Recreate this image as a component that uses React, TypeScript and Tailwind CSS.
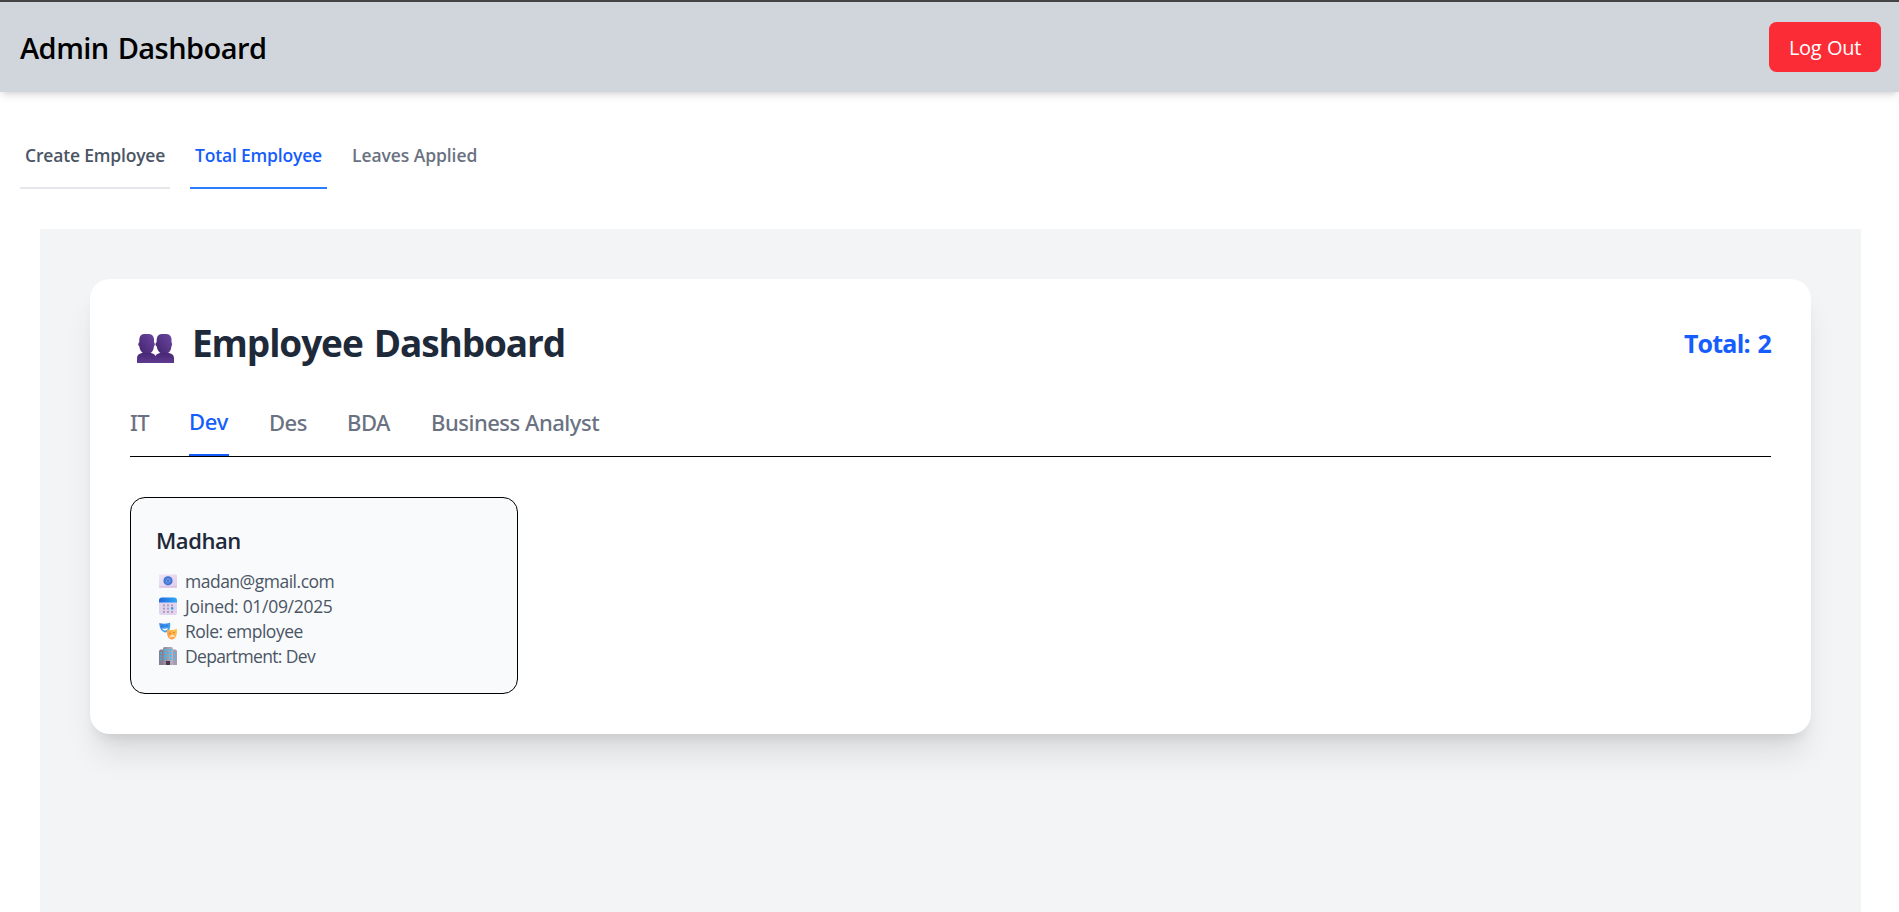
import React from "react";

function PeopleIcon() {
  return (
    <svg width="38" height="30" viewBox="0 0 38 30" className="block">
      <defs>
        <linearGradient id="head" x1="0" y1="1" x2="1" y2="0">
          <stop offset="0" stopColor="#43246f" />
          <stop offset="1" stopColor="#6b46a0" />
        </linearGradient>
        <linearGradient id="body" x1="0" y1="0" x2="0" y2="1">
          <stop offset="0" stopColor="#472775" />
          <stop offset="1" stopColor="#5f3b90" />
        </linearGradient>
      </defs>
      <g fill="url(#head)">
        <rect x="1.3" y="8" width="16.500" height="4.500" rx="2" />
        <rect x="18.500" y="8" width="16.500" height="4.500" rx="2" />
        <path d="M2.300 5Q3 0 7.500 0H11.500Q16.300 0 17 5V12Q16.500 18.500 12 19.500H7.500Q3 18.500 2.300 12Z" />
        <path d="M19.700 5Q20.500 0 25 0H29Q33.800 0 34.500 5V12Q34 18.500 29.500 19.500H25Q20.500 18.500 19.700 12Z" />
      </g>
      <path d="M0 29V24Q0 20 5 19H14Q19 20 19 24V29Z" fill="url(#body)" />
      <path d="M18 29V24Q18 20 23 19H32Q37 20 37 24V29Z" fill="url(#body)" />
    </svg>
  );
}

function MailIcon() {
  return (
    <svg width="18" height="18" viewBox="0 0 18 18" className="block">
      <defs>
        <linearGradient id="mail" x1="0" y1="0" x2="1" y2="1">
          <stop offset="0" stopColor="#efe6f5" />
          <stop offset="1" stopColor="#e0cbea" />
        </linearGradient>
      </defs>
      <rect y="2.500" width="18" height="13" rx="1" fill="url(#mail)" />
      <path d="M0 14.500H18V15Q18 15.500 17 15.500H1Q0 15.500 0 15Z" fill="#d3b3df" />
      <circle cx="9" cy="8.800" r="4.600" fill="#3b72d2" />
      <circle cx="9" cy="8.800" r="1.600" fill="none" stroke="#8fb0ee" strokeWidth="0.700" />
      <path d="M10.600 7.200V9.700Q11.800 10.800 12 8.800A3 3 0 1 0 10.500 11.500" fill="none" stroke="#6f98e4" strokeWidth="0.600" />
    </svg>
  );
}

function CalendarIcon() {
  return (
    <svg width="18" height="18" viewBox="0 0 18 18" className="block">
      <defs>
        <linearGradient id="cal" x1="0" y1="0" x2="1" y2="0">
          <stop offset="0" stopColor="#2368dc" />
          <stop offset="1" stopColor="#2ea7f8" />
        </linearGradient>
      </defs>
      <rect y="1" width="18" height="17" rx="2.500" fill="#e2d3ee" />
      <path d="M0 5.500V3.500Q0 0.500 3 0.500H15Q18 0.500 18 3.500V5.500Z" fill="url(#cal)" />
      <path d="M4 7.500h2v1.700H4zM8 7.500h2v1.700H8zM12 7.500h2v1.700h-2zM4 10.800h2v1.700H4zM8 10.800h2v1.700H8zM4 14h2v1.700H4zM8 14h2v1.700H8zM12 14h2v1.700h-2z" fill="#a79bb8" />
      <path d="M12 10.200h2.300v2.300H12z" fill="#289cf2" />
    </svg>
  );
}

function MasksIcon() {
  return (
    <svg width="18" height="18" viewBox="0 0 18 18" className="block">
      <defs>
        <linearGradient id="joy" x1="0" y1="0" x2="1" y2="1">
          <stop offset="0" stopColor="#3579e4" />
          <stop offset="1" stopColor="#43b5fa" />
        </linearGradient>
        <linearGradient id="sad" x1="1" y1="0" x2="0" y2="1">
          <stop offset="0" stopColor="#ffd052" />
          <stop offset="1" stopColor="#ff8d45" />
        </linearGradient>
      </defs>
      <path d="M0.300 1Q5 2.500 11 0.700Q12 6 9.500 9Q7 11.500 4 9.500Q0.500 7.500 0.300 1Z" fill="url(#joy)" />
      <path d="M2.300 4.500Q3.500 3.300 4.700 4.300M6.700 4.300Q8 3.200 9.200 4.200" stroke="#205bb5" strokeWidth="0.700" fill="none" />
      <path d="M3 6.200Q6 7.500 9 5.800Q8.200 8.800 5.800 8.600Q4 8.400 3 6.200Z" fill="#fff" />
      <path d="M8 7.500Q13 9 18 6.800Q18.500 14 15.500 16.500Q12.500 18.500 9.500 16Q7.500 13 8 7.500Z" fill="url(#sad)" />
      <path d="M9.800 11.200Q11 12 12 10.800M14 10.600Q15.500 11.200 16.400 9.800" stroke="#c26a25" strokeWidth="0.700" fill="none" />
      <path d="M10.500 15.500Q12.500 11.500 15.700 14.500Q13 13.800 10.500 15.500Z" fill="#fff4df" stroke="#fff4df" strokeWidth="0.500" />
    </svg>
  );
}

function OfficeIcon() {
  return (
    <svg width="18" height="18" viewBox="0 0 18 18" className="block">
      <defs>
        <linearGradient id="tower" x1="0" y1="0" x2="1" y2="0">
          <stop offset="0" stopColor="#8d8695" />
          <stop offset="1" stopColor="#bcb3c0" />
        </linearGradient>
      </defs>
      <path d="M0 4.500Q0 3 1.500 2.500H5V18H0Z" fill="#857d91" />
      <path d="M13 2.500H16.500Q18 3 18 4.500V18H13Z" fill="#a69baf" />
      <path d="M4 1.500Q4 0 5.500 0H12.500Q14 0 14 1.500V18H4Z" fill="url(#tower)" />
      <path d="M5.600 2h1.500v2H5.600zM8.300 2h1.500v2H8.300zM11 2h1.500v2H11zM5.600 5h1.500v2H5.600zM8.300 5h1.500v2H8.300zM11 5h1.500v2H11zM5.600 8h1.500v2H5.600zM8.300 8h1.500v2H8.300zM11 8h1.500v2H11zM5.600 11h1.500v1.500H5.600zM8.300 11h1.500v1.500H8.300zM11 11h1.500v1.500H11zM1.500 5h1.200v2H1.500zM1.500 8.300h1.200v2H1.500zM1.500 11.500h1.200v2H1.500zM15.300 5h1.200v2h-1.200zM15.300 8.300h1.200v2h-1.200zM15.300 11.500h1.200v2h-1.200z" fill="#35c1fa" />
      <rect x="7" y="14" width="4" height="4" fill="#4c3852" />
    </svg>
  );
}

const details = [
  { icon: <MailIcon />, text: "madan@gmail.com", tracking: "tracking-[-0.500px]" },
  { icon: <CalendarIcon />, text: "Joined: 01/09/2025", tracking: "tracking-[-0.300px]" },
  { icon: <MasksIcon />, text: "Role: employee", tracking: "tracking-[-0.500px]" },
  { icon: <OfficeIcon />, text: "Department: Dev", tracking: "tracking-[-0.650px]" },
];

export default function App() {
  return (
    <div className="flex h-screen flex-col overflow-hidden bg-white font-['Open_Sans',sans-serif] whitespace-nowrap">
      <header className="flex h-[92px] shrink-0 items-start justify-between border-t-2 border-[#444446] bg-[#d1d5dc] pt-5 pr-[18px] pl-5 shadow-[0_5px_7.5px_-1.25px_rgba(0,0,0,0.1),0_2.5px_5px_-2.5px_rgba(0,0,0,0.1)]">
        <h1 className="pt-[6px] text-[29px] leading-[40px] font-semibold tracking-[-0.550px] [word-spacing:2px] text-black">Admin Dashboard</h1>
        <button className="flex h-[50px] w-[112px] items-center justify-center rounded-[7.5px] bg-[#fb2c36] pt-px text-[20px] tracking-[-0.350px] [word-spacing:1px] text-white">
          Log Out
        </button>
      </header>

      <nav className="flex h-[97px] shrink-0 items-end gap-5 pl-5 text-[17.500px] leading-[25px] font-semibold">
        <div className="h-[58px] w-[150px] border-b-2 border-[#e5e7eb] pt-[12px] pl-[5px] tracking-[-0.180px] text-[#4a5565]">Create Employee</div>
        <div className="h-[58px] w-[137px] border-b-2 border-[#2b7fff] pt-[12px] pl-[5px] tracking-[-0.180px] text-[#155dfc]">Total Employee</div>
        <div className="h-[58px] w-[135px] pt-[12px] pl-[5px] tracking-[-0.080px] text-[#6a7282]">Leaves Applied</div>
      </nav>

      <main className="mt-10 mr-[38px] ml-10 grow bg-[#f3f4f6] p-[50px]">
        <section className="flex h-[455px] flex-col rounded-[20px] bg-white px-10 pt-[40px] shadow-[0_25px_31.25px_-6.25px_rgba(0,0,0,0.1),0_10px_12.5px_-7.5px_rgba(0,0,0,0.1)]">
          <div className="flex h-[50px] items-center justify-between">
            <div className="flex items-center pl-[7px]">
              <div className="mt-[9px] w-[55px]">
                <PeopleIcon />
              </div>
              <h2 className="-mt-[2px] text-[37px] leading-[50px] font-bold tracking-[-1.100px] [word-spacing:2.500px] text-[#1e2939]">Employee Dashboard</h2>
            </div>
            <p className="-mt-[2px] text-[25px] leading-[40px] font-bold tracking-[-0.800px] [word-spacing:2px] text-[#155dfc]">Total: 2</p>
          </div>

          <nav className="mt-[30px] flex h-[58px] shrink-0 border-b border-black text-[22px] leading-[35px] font-medium tracking-[-0.480px] text-[#6a7282] font-['Noto_Sans','Open_Sans',sans-serif]">
            <div className="w-[59px] pt-[6px]">IT</div>
            <div className="mr-10 h-[57px] w-10 border-b-2 border-[#155dfc] pt-[5px] tracking-[-0.300px] text-[#155dfc]">Dev</div>
            <div className="w-[78px] pt-[6px]">Des</div>
            <div className="w-[84px] pt-[6px]">BDA</div>
            <div className="pt-[6px]">Business Analyst</div>
          </nav>

          <article className="mt-10 h-[197px] w-[388px] rounded-[15px] border border-black bg-[#f9fafb] px-[25px] pt-[25px]">
            <h3 className="mb-[10px] text-[22px] leading-[35px] font-semibold tracking-[-0.450px] text-[#1e2939]">Madhan</h3>
            <ul className="text-[17.500px] leading-[25px] text-[#4a5565]">
              {details.map((d) => (
                <li key={d.text} className="flex h-[25px] items-center">
                  <span className="ml-[3px] w-[26px]">{d.icon}</span>
                  <span className={`pt-px ${d.tracking}`}>{d.text}</span>
                </li>
              ))}
            </ul>
          </article>
        </section>
      </main>
    </div>
  );
}
